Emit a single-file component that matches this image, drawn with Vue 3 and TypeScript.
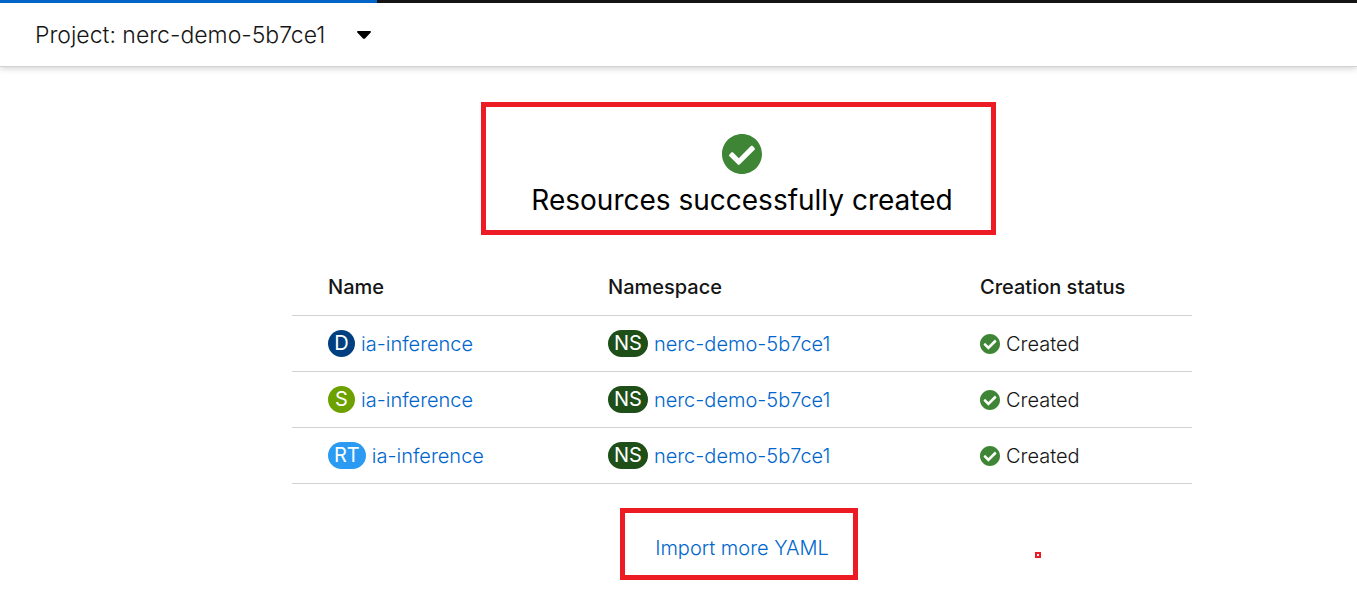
<script setup lang="ts">
interface Resource {
  kind: string
  tone: string
  name: string
  namespace: string
  status: string
}

const project = 'nerc-demo-5b7ce1'

const resources: Resource[] = [
  { kind: 'D', tone: 'deployment', name: 'ia-inference', namespace: project, status: 'Created' },
  { kind: 'S', tone: 'service', name: 'ia-inference', namespace: project, status: 'Created' },
  { kind: 'RT', tone: 'route', name: 'ia-inference', namespace: project, status: 'Created' },
]

const checkPath =
  'M504 256c0 136.967-111.033 248-248 248S8 392.967 8 256 119.033 8 256 8s248 111.033 248 248zM227.314 387.314l184-184c6.248-6.248 6.248-16.379 0-22.627l-22.627-22.627c-6.248-6.249-16.379-6.249-22.628 0L216 308.118l-70.059-70.059c-6.248-6.248-16.379-6.248-22.628 0l-22.627 22.627c-6.248 6.248-6.248 16.379 0 22.627l104 104c6.249 6.249 16.379 6.249 22.628.001z'
</script>

<template>
  <div class="page">
    <div class="masthead"><div class="masthead-accent"></div></div>
    <header class="project-bar">
      <button type="button" class="project-toggle">
        <span>Project: {{ project }}</span>
        <svg class="caret" viewBox="0 0 14 8" aria-hidden="true">
          <path d="M1 0h12c.9 0 1.300.9.7 1.500L8 7.500c-.6.600-1.400.600-2 0L.3 1.500C-.3.900.1 0 1 0z" />
        </svg>
      </button>
    </header>

    <main class="content">
      <section class="result">
        <svg class="result-icon" viewBox="8 8 496 496" aria-hidden="true"><path :d="checkPath" /></svg>
        <h1>Resources successfully created</h1>
        <span class="highlight"></span>
      </section>

      <table>
        <colgroup>
          <col class="col-name" />
          <col class="col-namespace" />
          <col />
        </colgroup>
        <thead>
          <tr>
            <th scope="col">Name</th>
            <th scope="col">Namespace</th>
            <th scope="col">Creation status</th>
          </tr>
        </thead>
        <tbody>
          <tr v-for="item in resources" :key="item.kind">
            <td>
              <div class="cell">
                <span class="badge" :class="item.tone">{{ item.kind }}</span>
                <a href="#">{{ item.name }}</a>
              </div>
            </td>
            <td>
              <div class="cell">
                <span class="badge namespace">NS</span>
                <a href="#">{{ item.namespace }}</a>
              </div>
            </td>
            <td>
              <div class="cell">
                <svg class="status-icon" viewBox="8 8 496 496" aria-hidden="true"><path :d="checkPath" /></svg>
                <span>{{ item.status }}</span>
              </div>
            </td>
          </tr>
        </tbody>
      </table>

      <div class="actions">
        <button type="button" class="import-link">Import more YAML</button>
        <span class="highlight"></span>
        <span class="marker"></span>
      </div>
    </main>
  </div>
</template>

<style>
body {
  background: #fff;
}
</style>

<style scoped>
.page {
  font-family: Inter, "Liberation Sans", sans-serif;
  font-size: 20px;
  font-weight: 300;
  line-height: 32px;
  color: #151515;
}

.masthead {
  height: 3px;
  background: #151515;
}

.masthead-accent {
  width: 377px;
  height: 3px;
  background: #06c;
}

.project-bar {
  display: flex;
  align-items: center;
  height: 63px;
  padding: 0 35px;
  border-bottom: 1px solid #d2d2d2;
  box-shadow: 0 2px 6px rgba(0, 0, 0, 0.16);
}

.project-toggle {
  display: flex;
  align-items: center;
  gap: 32px;
  padding: 0;
  border: 0;
  background: none;
  color: inherit;
  font: inherit;
  font-size: 23px;
}

.caret {
  width: 14px;
  height: 8px;
}

.content {
  display: flex;
  flex-direction: column;
  align-items: center;
  margin-left: 127px;
  padding: 67px 24px 24px;
}

.result {
  position: relative;
  display: flex;
  flex-direction: column;
  align-items: center;
}

.result-icon {
  width: 40px;
  height: 40px;
  fill: #3e8635;
}

h1 {
  margin: 6px 0 0;
  font-size: 28px;
  font-weight: 400;
  line-height: 40px;
  color: #000;
}

.highlight {
  position: absolute;
  border: 5px solid #ed1c24;
  pointer-events: none;
}

.result .highlight {
  inset: -32px -43px -15px -50px;
}

table {
  width: 100%;
  max-width: 900px;
  margin-top: 38px;
  table-layout: fixed;
  border-collapse: separate;
  border-spacing: 0;
}

.col-name {
  width: 316px;
}

.col-namespace {
  width: 372px;
}

th,
td {
  box-sizing: border-box;
  height: 56px;
  padding: 0;
  border-bottom: 1px solid #d2d2d2;
  text-align: left;
}

th {
  height: 58px;
  font-weight: 500;
}

th:first-child,
td:first-child {
  padding-left: 36px;
}

.cell {
  display: flex;
  align-items: center;
  gap: 6px;
}

.badge {
  box-sizing: border-box;
  min-width: 27px;
  padding: 0 6px;
  border-radius: 14px;
  color: #fff;
  font-weight: 400;
  line-height: 27px;
  text-align: center;
}

.deployment {
  background: #004080;
}

.service {
  background: #6ca100;
}

.route {
  background: #2b9af3;
}

.namespace {
  background: #1e4f18;
}

.status-icon {
  width: 20px;
  height: 20px;
  fill: #3e8635;
}

a,
.import-link {
  color: #06c;
  text-decoration: none;
}

.actions {
  position: relative;
  margin-top: 48px;
}

.import-link {
  display: block;
  padding: 0;
  border: 0;
  background: none;
  font: inherit;
}

.actions .highlight {
  inset: -24px -29px -16px -35px;
}

.marker {
  position: absolute;
  top: 20px;
  left: 380px;
  box-sizing: border-box;
  width: 6px;
  height: 6px;
  border: 2px solid #ed1c24;
}
</style>
